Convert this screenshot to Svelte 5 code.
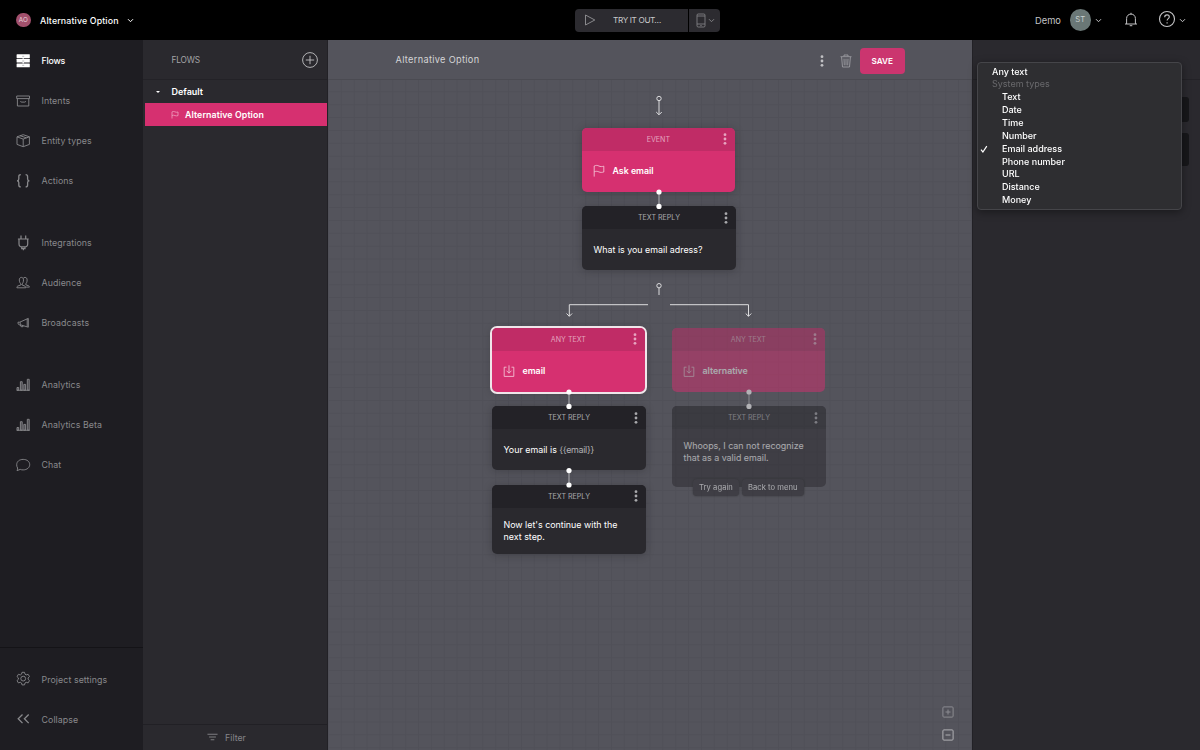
<script lang="ts">
	type NavItem = { label: string; icon: string; active?: boolean };

	const navGroups: NavItem[][] = [
		[
			{ label: 'Flows', icon: 'flows', active: true },
			{ label: 'Intents', icon: 'archive' },
			{ label: 'Entity types', icon: 'box' },
			{ label: 'Actions', icon: 'braces' }
		],
		[
			{ label: 'Integrations', icon: 'plug' },
			{ label: 'Audience', icon: 'people' },
			{ label: 'Broadcasts', icon: 'megaphone' }
		],
		[
			{ label: 'Analytics', icon: 'bars' },
			{ label: 'Analytics Beta', icon: 'bars' },
			{ label: 'Chat', icon: 'chat' }
		]
	];

	const footerItems: NavItem[] = [
		{ label: 'Project settings', icon: 'gear' },
		{ label: 'Collapse', icon: 'collapse' }
	];

	const systemTypes = [
		'Text',
		'Date',
		'Time',
		'Number',
		'Email address',
		'Phone number',
		'URL',
		'Distance',
		'Money'
	];
	let selectedType = $state('Email address');

	// positions are relative to the canvas
	const nodes = [
		{ id: 1, x: 254, y: 87.5, w: 152.7, h: 64, kind: 'event', title: 'EVENT', text: 'Ask email', icon: 'flag' },
		{ id: 2, x: 254, y: 166, w: 154, h: 64, kind: 'reply', title: 'TEXT REPLY', text: 'What is you email adress?' },
		{ id: 3, x: 164, y: 287.5, w: 152.7, h: 64, kind: 'event', title: 'ANY TEXT', text: 'email', icon: 'inbox', selected: true },
		{ id: 4, x: 344, y: 287.5, w: 152.7, h: 64, kind: 'event', title: 'ANY TEXT', text: 'alternative', icon: 'inbox', faded: true },
		{ id: 5, x: 164, y: 366, w: 154, h: 64, kind: 'reply', title: 'TEXT REPLY', text: 'Your email is ', variable: '{{email}}' },
		{ id: 6, x: 164, y: 444.7, w: 154, h: 69, kind: 'reply', title: 'TEXT REPLY', text: "Now let's continue with the\nnext step." },
		{
			id: 7, x: 344, y: 366, w: 154, h: 81, kind: 'reply', title: 'TEXT REPLY', faded: true,
			text: 'Whoops, I can not recognize\nthat as a valid email.',
			buttons: ['Try again', 'Back to menu']
		}
	];

	const links = [
		{ x: 331, y: 152, faded: false },
		{ x: 241, y: 352, faded: false },
		{ x: 241, y: 430.6, faded: false },
		{ x: 421, y: 352, faded: true }
	];
</script>

{#snippet icon(name: string)}
	<svg class="icon" viewBox="0 0 16 16">
		{#if name === 'flows'}
			<g fill="currentColor" stroke="none">
				<rect x="1.6" y="1.2" width="13.2" height="3.8" rx=".5" />
				<rect x="1.6" y="5.8" width="13.2" height="3.8" rx=".5" />
				<rect x="1.6" y="10.4" width="13.2" height="3.8" rx=".5" />
			</g>
			<path d="M8.2 3.8v2M8.2 8.4v2" stroke-width="1.4" />
			<path d="M7.2 3.3h2M7.2 8h2M7.2 12.3h2" stroke="#8a898e" stroke-width=".6" />
		{:else if name === 'archive'}
			<path d="M1.7 3h12.8v2.6H1.7zM2.4 5.6v7.4h11.4V5.6M5.600 8.200c0 .7.3.9.8.9h3.400c.5 0 .8-.2.8-.9" />
		{:else if name === 'box'}
			<path d="M8.2 1.7 14.4 3.800v7.600l-6.200 2.300L2 11.400V3.800zM2 3.800l6.200 2.300 6.200-2.300M8.200 6.100v7.600M5 2.700l6.400 2.100" />
		{:else if name === 'braces'}
			<path stroke-width="1.3" d="M5.8 1.700C4 1.700 3.800 2.500 3.800 3.700v2.300c0 1-.5 1.800-1.800 1.800 1.300 0 1.800.8 1.800 1.800v2.300c0 1.200.2 2 2 2M10.600 1.700c1.800 0 2 .8 2 2v2.300c0 1 .5 1.800 1.800 1.800-1.300 0-1.800.8-1.800 1.800v2.300c0 1.200-.2 2-2 2" />
		{:else if name === 'plug'}
			<path stroke-width="1.2" d="M6 .5v3.400M10.700.5v3.400M2.900 4h10.800M4 4v4.700c0 2 1.300 3.200 3 3.200h2.700c1.700 0 3-1.200 3-3.200V4M6.700 12h3.300v1.600H6.700zM8.400 13.600v1.600" />
		{:else if name === 'people'}
			<path d="M6.300 9.200C5 8.200 4.300 6.900 4.300 4.900 4.300 3.200 5.300 2.400 6.400 2.400s2.100.8 2.100 2.500c0 2-.7 3.300-1.400 4.100v1l3 1.200c.6.3.7.8.7 1.600H1.900c0-.9.1-1.400.8-1.700l3.200-1.200V8.900M8.300 3.200c.4-.6 1-.8 1.700-.8 1.400 0 2.100 1 2.100 2.500 0 2-.5 3.100-1.300 3.900v1l2.800 1c.7.3.8.9.8 1.300h-3.200" />
		{:else if name === 'megaphone'}
			<path d="M13.300 3.400v8.800L5.800 9.900H4.500L3 8.800V7.200h1.700zM12.200 3.700v8.100M5.200 7.200v2.600l.9 1.900h2l-.8-1.300" />
		{:else if name === 'bars'}
			<path fill="currentColor" fill-opacity=".35" d="M2 10.500h1.700v2.700H2zM5.400 4.700h1.800v8.500H5.400zM8.800 7.400h1.800v5.800H8.800zM12.300 2.300h1.900v10.900h-1.900z" />
			<path d="M1.600 13.300h13.200" />
		{:else if name === 'chat'}
			<path d="M2 13.600c.4-.9.7-1.700.6-2.600-.7-1-.9-2.100-.9-3.300 0-3.200 2.700-5.300 6.500-5.300s6.500 2.200 6.500 5.200-2.800 5.300-6.500 5.300c-1.100 0-2-.1-2.900-.5z" />
		{:else if name === 'gear'}
			<circle cx="8.2" cy="7.6" r="2.4" />
			<path d="M7 1.300h2.500l.5 1.900 1.200.7 1.900-.6 1.400 2.300-1.400 1.300v1.400l1.400 1.300-1.400 2.300-1.900-.6-1.200.7-.5 1.900H7l-.5-1.900-1.200-.7-1.900.6L2 9.600l1.400-1.300V6.900L2 5.600l1.400-2.300 1.900.6 1.200-.7z" stroke-linejoin="round" />
		{:else if name === 'collapse'}
			<path stroke-width="1.3" d="M7.500 3.500 3.200 7.800l4.300 4.300M13.700 3.500 9.400 7.800l4.300 4.300" />
		{:else if name === 'flag'}
			<path d="M3.200 13.600V3c1.800-.8 3.200-.8 4.700 0s3.200.7 4.900.2V9c-1.700.5-3.400.6-4.900-.1s-3-.8-4.700-.1" />
		{:else if name === 'inbox'}
			<path d="M5.500 4.200H3.200v9.200h9.600V4.200h-2.300M8 2.300v7.800M5.500 7.700 8 10.200l2.500-2.500" />
		{/if}
	</svg>
{/snippet}

{#snippet chevron()}
	<svg class="chevron" viewBox="0 0 7 5"><path d="M1 1.2 3.5 3.7 6 1.2" /></svg>
{/snippet}

{#snippet dots()}
	<svg class="dots" viewBox="0 0 4 12">
		<circle cx="2" cy="1.7" r="1.4" />
		<circle cx="2" cy="6" r="1.4" />
		<circle cx="2" cy="10.3" r="1.4" />
	</svg>
{/snippet}

<div class="app">
	<header class="topbar">
		<div class="project">
			<span class="project-badge">AO</span>
			<span class="project-name">Alternative Option</span>
			{@render chevron()}
		</div>
		<div class="try">
			<button class="try-main">
				<svg class="play" viewBox="0 0 12 12"><path d="M1.5 1 10.8 6l-9.300 5z" /></svg>
				<span>TRY IT OUT…</span>
			</button>
			<button class="try-device">
				<svg class="phone" viewBox="0 0 10 15">
					<rect x="1" y="1" width="8" height="13" rx="1.2" />
					<path d="M1 3h8M1 11h8M4.3 12.6h1.400" />
				</svg>
				{@render chevron()}
			</button>
		</div>
		<div class="account">
			<span class="account-name">Demo</span>
			<span class="avatar">ST</span>
			{@render chevron()}
			<svg class="bell" viewBox="0 0 14 16">
				<path d="M1 12h12M2.6 12V6.500C2.600 3.800 4.500 2.100 7 2.100s4.400 1.700 4.400 4.400V12M7 .8v1.300M5.700 13.700h2.600" />
			</svg>
			<svg class="help" viewBox="0 0 18 18">
				<circle cx="9" cy="9" r="7.500" />
				<path d="M6.7 7.200c0-1.500 1-2.300 2.300-2.300s2.300.8 2.300 2c0 1.700-2.200 1.700-2.200 3.600M9.100 12.200v1.200" />
			</svg>
			{@render chevron()}
		</div>
	</header>

	<div class="main">
		<aside class="sidebar">
			<nav>
				{#each navGroups as group}
					<div class="nav-group">
						{#each group as item (item.label)}
							<div class="nav-item" class:active={item.active}>
								{@render icon(item.icon)}
								<span>{item.label}</span>
							</div>
						{/each}
					</div>
				{/each}
			</nav>
			<div class="sidebar-footer">
				{#each footerItems as item (item.label)}
					<div class="nav-item">
						{@render icon(item.icon)}
						<span>{item.label}</span>
					</div>
				{/each}
			</div>
		</aside>

		<section class="flows">
			<div class="flows-header">
				<span>FLOWS</span>
				<svg class="add" viewBox="0 0 16 16"><circle cx="8" cy="8" r="7.400" /><path d="M8 3.800v8.400M3.800 8h8.400" /></svg>
			</div>
			<div class="folder"><i class="caret"></i>Default</div>
			<div class="flow-row">
				{@render icon('flag')}
				<span>Alternative Option</span>
			</div>
			<div class="filter">
				<svg viewBox="0 0 12 8"><path d="M.5 1h11M2.300 4h7.400M4 7h4" /></svg>
				<span>Filter</span>
			</div>
		</section>

		<section class="editor">
			<div class="editor-header">
				<span class="editor-title">Alternative Option</span>
				{@render dots()}
				<svg class="trash" viewBox="0 0 12 14">
					<path d="M.5 2.700h11M4 2.500V1h4v1.500M1.600 3l.9 10h7l.9-10M4 4.700l.3 6.600M6 4.700v6.600M8 4.700l-.3 6.600" />
				</svg>
				<button class="save">SAVE</button>
			</div>
			<div class="grid"></div>

			<svg class="wires" viewBox="0 0 644 710">
				<circle cx="331" cy="58.5" r="2.200" />
				<path d="M331 61v13.500M328.200 72l2.800 2.800 2.800-2.800" />
				<circle cx="331" cy="245.700" r="2.200" />
				<path d="M331 248v7" />
				<path d="M320 264.700h-78.700v11.500M238.500 273.500l2.800 2.800 2.800-2.800" />
				<path d="M342 264.700h78.500v11.500M417.700 273.500l2.800 2.800 2.800-2.800" />
			</svg>

			{#each nodes as node (node.id)}
				<article
					class="node {node.kind}"
					class:selected={node.selected}
					class:faded={node.faded}
					style="left: {node.x}px; top: {node.y}px; width: {node.w}px; height: {node.h}px"
				>
					<div class="node-header">
						<span>{node.title}</span>
						{@render dots()}
					</div>
					<div class="node-body" class:with-buttons={node.buttons}>
						{#if node.icon}{@render icon(node.icon)}{/if}
						<p>{node.text}{#if node.variable}<span class="variable">{node.variable}</span>{/if}</p>
					</div>
					{#if node.buttons}
						<div class="quick-replies">
							{#each node.buttons as label (label)}
								<span>{label}</span>
							{/each}
						</div>
					{/if}
				</article>
			{/each}

			<svg class="wires" viewBox="0 0 644 710">
				{#each links as link}
					<g class="link" class:faded={link.faded}>
						<line x1={link.x} y1={link.y} x2={link.x} y2={link.y + 14.4} />
						<circle cx={link.x} cy={link.y} r="2.600" />
						<circle cx={link.x} cy={link.y + 14.4} r="2.600" />
					</g>
				{/each}
			</svg>

			<div class="zoom">
				<svg viewBox="0 0 12 12"><rect x=".9" y=".9" width="10.2" height="10.2" rx="1" /><path d="M6 3.500v5M3.500 6h5" /></svg>
				<svg class="out" viewBox="0 0 12 12"><rect x=".9" y=".9" width="10.2" height="10.2" rx="1" /><path d="M3.500 6h5" /></svg>
			</div>
		</section>

		<aside class="inspector">
			<div class="inspector-header"></div>
			<div class="field"></div>
			<div class="field tall"></div>

			<ul class="menu">
				<li>Any text</li>
				<li class="label">System types</li>
				{#each systemTypes as type (type)}
					<li class="child">
						{#if type === selectedType}
							<svg class="check" viewBox="0 0 8 8"><path d="M1 4.700 2.900 7 6.800 1.200" /></svg>
						{/if}
						{type}
					</li>
				{/each}
			</ul>
		</aside>
	</div>
</div>

<style>
	:global(body) {
		background: #000;
		overflow: hidden;
	}

	.app {
		width: 1200px;
		height: 750px;
		display: flex;
		flex-direction: column;
		font-family: Inter, 'Liberation Sans', sans-serif;
		font-size: 8.8px;
		color: #fff;
	}

	svg {
		display: block;
		flex: none;
		fill: none;
		stroke: currentColor;
	}

	button {
		font: inherit;
		color: inherit;
		border: 0;
		padding: 0;
	}

	.icon {
		width: 16px;
		height: 16px;
		stroke-width: 0.9;
	}

	.chevron {
		width: 7px;
		height: 5px;
		stroke-width: 1;
	}

	.dots {
		width: 4px;
		height: 12px;
		fill: currentColor;
		stroke: none;
	}

	/* top bar */
	.topbar {
		height: 40px;
		flex: none;
		display: flex;
		align-items: center;
		background: #000;
	}

	.project {
		width: 575px;
		display: flex;
		align-items: center;
		padding-left: 16px;
		box-sizing: border-box;
	}

	.project-badge {
		width: 14.5px;
		height: 14.5px;
		border-radius: 50%;
		background: #a2506c;
		font-size: 6.3px;
		line-height: 14.5px;
		text-align: center;
		color: #e8d5dc;
	}

	.project-name {
		width: 79px;
		margin: 0 7.5px 0 9.5px;
		font-weight: 500;
		letter-spacing: 0.14px;
		white-space: nowrap;
	}

	.try {
		display: flex;
		gap: 1px;
		color: #c9c9cb;
	}

	.try-main,
	.try-device {
		height: 23px;
		display: flex;
		align-items: center;
		background: #2c2b30;
	}

	.try-main {
		width: 113px;
		gap: 17px;
		padding-left: 9px;
		border-radius: 4px 0 0 4px;
	}

	.try-main span {
		font-size: 8.2px;
		letter-spacing: -0.36px;
	}

	.try-device {
		width: 31px;
		gap: 2px;
		padding-left: 7px;
		border-radius: 0 4px 4px 0;
		color: #808083;
	}

	.play {
		width: 12px;
		height: 12px;
		color: #939396;
		stroke-width: 0.9;
	}

	.phone {
		width: 10px;
		height: 15px;
		stroke-width: 0.9;
	}

	.account {
		margin-left: auto;
		padding-right: 14px;
		display: flex;
		align-items: center;
		color: #c4c4c6;
	}

	.account-name {
		width: 26px;
		font-size: 9.3px;
	}

	.avatar {
		width: 21.5px;
		height: 21.5px;
		margin: 0 4px 0 8.5px;
		border-radius: 50%;
		background: #6a7776;
		font-size: 7.7px;
		line-height: 21.5px;
		text-align: center;
		color: #c8cfce;
	}

	.bell {
		width: 14px;
		height: 16px;
		margin: 0 20.5px 1px 21.5px;
	}

	.help {
		width: 18px;
		height: 18px;
		margin: 0 3px 2px 0;
		stroke-width: 1.1;
	}

	.main {
		flex: 1;
		display: flex;
		min-height: 0;
	}

	/* sidebar */
	.sidebar {
		width: 143px;
		flex: none;
		display: flex;
		flex-direction: column;
		justify-content: space-between;
		background: #1e1d22;
		color: #89898c;
	}

	nav {
		padding-top: 0.5px;
	}

	.nav-group {
		margin-bottom: 22px;
	}

	.nav-item {
		height: 40px;
		display: flex;
		align-items: center;
		gap: 10.5px;
		padding-left: 15px;
		letter-spacing: 0.09px;
	}

	.nav-item.active {
		color: #fff;
		font-weight: 500;
		letter-spacing: -0.2px;
	}

	.sidebar-footer {
		height: 103px;
		padding-top: 11px;
		border-top: 1px solid #141317;
		box-sizing: border-box;
	}

	/* flow list */
	.flows {
		width: 185px;
		flex: none;
		display: flex;
		flex-direction: column;
		background: #2a292e;
		border-right: 1px solid #222126;
		box-sizing: border-box;
	}

	.flows-header {
		height: 40px;
		display: flex;
		align-items: center;
		justify-content: space-between;
		padding: 0 9px 0 28.5px;
		border-bottom: 1px solid #232227;
		box-sizing: border-box;
		font-size: 8.300px;
		letter-spacing: -0.15px;
		color: #a5a5a8;
	}

	.add {
		width: 16px;
		height: 16px;
		color: #c2c2c4;
		stroke-width: 0.9;
	}

	.folder {
		height: 23px;
		display: flex;
		align-items: center;
		gap: 11.5px;
		padding-left: 13px;
		font-size: 9px;
		font-weight: 600;
	}

	.caret {
		border: 2px solid transparent;
		border-top-color: #fff;
		border-bottom: 0;
	}

	.flow-row {
		height: 23px;
		display: flex;
		align-items: center;
		gap: 5px;
		margin-left: 1.5px;
		padding-left: 25.5px;
		background: #d63070;
		font-weight: 600;
		letter-spacing: 0.09px;
	}

	.flow-row .icon {
		width: 10px;
		height: 10px;
		color: #ee9fbe;
		stroke-width: 1.3;
	}

	.filter {
		height: 26px;
		margin-top: auto;
		display: flex;
		align-items: center;
		justify-content: center;
		gap: 7px;
		padding: 0 17px 1px 0;
		border-top: 1px solid #212025;
		box-sizing: border-box;
		font-size: 8.8px;
		color: #858589;
	}

	.filter svg {
		width: 11px;
		height: 8px;
	}

	/* editor */
	.editor {
		width: 644px;
		flex: none;
		position: relative;
		background: #54545c;
	}

	.editor-header {
		height: 40px;
		display: flex;
		align-items: center;
		padding: 2px 67.5px 0;
		border-bottom: 1px solid #4b4b52;
		box-sizing: border-box;
		color: #c0c0c3;
	}

	.editor-title {
		margin: 0 auto 3px 0;
		font-size: 9.2px;
		letter-spacing: 0.32px;
		color: #d4d4d6;
	}

	.trash {
		width: 12px;
		height: 14px;
		margin: 0 8px 0 16px;
		color: #9c9ca1;
		stroke-width: 0.9;
	}

	.save {
		width: 44.5px;
		height: 26px;
		border-radius: 4px;
		background: #cb356f;
		color: #fff;
		font-size: 8.2px;
		font-weight: 600;
	}

	.grid {
		height: 670px;
		background-image: linear-gradient(to right, #505058 1px, transparent 1px),
			linear-gradient(to bottom, #505058 1px, transparent 1px);
		background-size: 12.86px 12.86px;
		background-position: 0 -1.5px;
	}

	.wires {
		position: absolute;
		inset: 0;
		width: 644px;
		height: 710px;
		color: #dcdcde;
		stroke-width: 1;
		pointer-events: none;
	}

	.link line {
		stroke: #b4b4b8;
	}

	.link circle {
		fill: #fff;
		stroke: none;
	}

	.link.faded circle {
		fill: #b2b2b6;
	}

	.link.faded line {
		stroke: #8c8c92;
	}

	.node {
		position: absolute;
		display: flex;
		flex-direction: column;
		border-radius: 5px;
		box-shadow: 0 1px 8px rgba(20, 20, 25, 0.28);
	}

	.node-header {
		height: 23px;
		flex: none;
		position: relative;
		display: flex;
		align-items: center;
		justify-content: center;
		border-radius: 5px 5px 0 0;
		font-size: 7.1px;
	}

	.node-header .dots {
		position: absolute;
		right: 8px;
		color: #a9a9ac;
	}

	.node-body {
		flex: 1;
		display: flex;
		align-items: center;
		padding: 0 11.5px;
	}

	.node-body.with-buttons {
		padding-bottom: 13px;
	}

	.node-body p {
		margin: 0;
		font-size: 8.9px;
		line-height: 11.5px;
		white-space: pre;
	}

	.variable {
		color: #b2b2b5;
		letter-spacing: -0.3px;
	}

	.event {
		background: #d63070;
	}

	.event .node-header {
		background: #c02c66;
		color: #e3a3bd;
	}

	.event .dots {
		right: 8px;
		color: #e7a5c0;
	}

	.event .node-body {
		gap: 5.5px;
		padding: 0 9px 1px;
		font-weight: 600;
	}

	.event .node-body p {
		font-size: 8.8px;
	}

	.event .icon {
		margin-top: 1px;
		color: #f3bfd3;
	}

	.reply {
		background: #2a292e;
	}

	.reply .node-header {
		background: #232227;
		color: #a9a9ac;
	}

	.selected {
		outline: 2px solid #efe6ea;
		outline-offset: -0.5px;
	}

	.node.faded {
		opacity: 0.5;
		box-shadow: none;
	}

	.quick-replies {
		position: absolute;
		top: 72.5px;
		left: 21px;
		display: flex;
		gap: 3px;
	}

	.quick-replies span {
		height: 17px;
		padding: 0 6px;
		border-radius: 4px;
		background: #2a292e;
		box-shadow: 0 0 2px #111;
		font-size: 7.6px;
		line-height: 17px;
		letter-spacing: 0.06px;
		white-space: nowrap;
	}

	.zoom {
		position: absolute;
		right: 18px;
		bottom: 9px;
		display: flex;
		flex-direction: column;
		gap: 11px;
		color: #8b8b91;
	}

	.zoom svg {
		width: 12px;
		height: 12px;
	}

	.zoom .out {
		color: #b0b0b4;
	}

	/* inspector */
	.inspector {
		flex: 1;
		position: relative;
		background: #2a292e;
		border-left: 1px solid #222126;
	}

	.inspector-header {
		height: 39px;
		border-bottom: 1px solid #232227;
	}

	.field {
		height: 25px;
		margin: 17px 11px 0 10px;
		border-radius: 3px;
		background: #17171a;
	}

	.field.tall {
		height: 33px;
		margin-top: 11px;
	}

	.menu {
		position: absolute;
		left: 4px;
		top: 22px;
		width: 205px;
		height: 148px;
		margin: 0;
		padding: 2.5px 0 0 14px;
		box-sizing: border-box;
		list-style: none;
		border: 1px solid #454549;
		border-radius: 4px;
		background: #2e2e31;
		box-shadow: 0 2px 8px rgba(0, 0, 0, 0.4);
		font-weight: 500;
		font-size: 9px;
		line-height: 12.86px;
	}

	.menu .label {
		color: #69696c;
		font-weight: 400;
	}

	.menu .child {
		position: relative;
		padding-left: 10px;
	}

	.check {
		position: absolute;
		left: -12px;
		top: 2px;
		width: 8px;
		height: 8px;
		stroke-width: 1.2;
	}
</style>
